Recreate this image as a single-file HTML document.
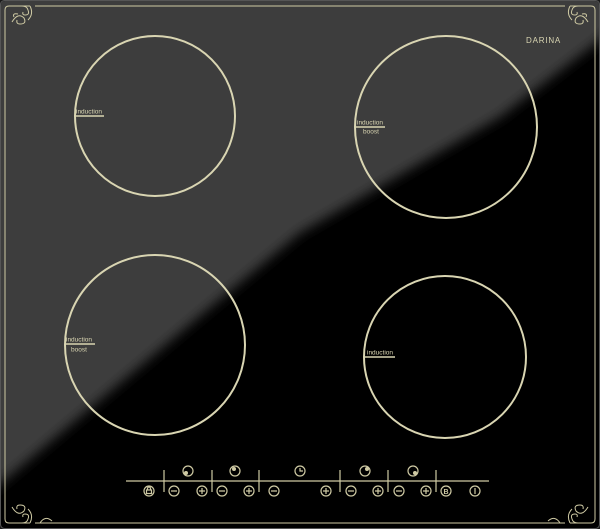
<!DOCTYPE html>
<html><head><style>
html,body{margin:0;padding:0;background:#000;}
svg{display:block}
</style></head><body>
<svg width="600" height="529" viewBox="0 0 600 529" xmlns="http://www.w3.org/2000/svg">
<defs>
<filter id="bl" x="-10%" y="-10%" width="120%" height="120%"><feGaussianBlur stdDeviation="6"/></filter>
<clipPath id="cp"><rect x="1" y="1" width="598" height="527" rx="4"/></clipPath>
</defs>
<rect x="0" y="0" width="600" height="529" fill="#1a1a1a"/>
<g clip-path="url(#cp)">
<rect x="0" y="0" width="600" height="529" fill="#000"/>
<polygon points="-20,-20 620,-20 620,20 600,40 500,117 300,233 200,316 100,400 0,484 -20,500" fill="#3c3c3c" filter="url(#bl)"/>
</g>
<rect x="0.5" y="0.5" width="599" height="528" rx="4" fill="none" stroke="#555" stroke-width="1"/>
<g fill="none" stroke="#cfcaa4" stroke-width="1">
<line x1="35" y1="6" x2="565" y2="6"/>
<line x1="5" y1="28" x2="5" y2="500"/>
<line x1="595" y1="28" x2="595" y2="500"/>
<line x1="35" y1="523" x2="565" y2="523"/>
<!-- corners -->
<path d="M5 28 V10 Q5 6 9 6 H30 M22 6 q5 0 6 4 q2 5 -3 5 q-3 0 -2 -3"/>
<path d="M12 22 q6 -10 12 -4 q3 6 -4 6 q-4 0 -3 -4 M30 6 q4 8 -2 14 M14 17 q-2 -4 4 -3"/>
<path d="M595 28 V10 Q595 6 591 6 H570 M578 6 q-5 0 -6 4 q-2 5 3 5 q3 0 2 -3"/>
<path d="M588 22 q-6 -10 -12 -4 q-3 6 4 6 q4 0 3 -4 M570 6 q-4 8 2 14 M586 17 q2 -4 -4 -3"/>
<path d="M5 500 V519 Q5 523 9 523 H30 M22 523 q5 0 6 -4 q2 -5 -3 -5 q-3 0 -2 3"/>
<path d="M12 507 q6 10 12 4 q3 -6 -4 -6 q-4 0 -3 4 M30 523 q4 -8 -2 -14 M40 523 q5 -8 12 -2"/>
<path d="M595 500 V519 Q595 523 591 523 H570 M578 523 q-5 0 -6 -4 q-2 -5 3 -5 q3 0 2 3"/>
<path d="M588 507 q-6 10 -12 4 q-3 -6 4 -6 q4 0 3 4 M570 523 q-4 -8 2 -14 M560 523 q-5 -8 -12 -2"/>
</g>
<g fill="none" stroke="#d9d5b2" stroke-width="2">
<circle cx="155" cy="116" r="80"/>
<circle cx="446" cy="127" r="91"/>
<circle cx="155" cy="345" r="90"/>
<circle cx="445" cy="357" r="81"/>
</g>
<g stroke="#d9d5b2" stroke-width="1.5">
<line x1="74" y1="116" x2="104" y2="116"/>
<line x1="355" y1="127" x2="385" y2="127"/>
<line x1="65" y1="344" x2="95" y2="344"/>
<line x1="364" y1="357" x2="395" y2="357"/>
</g>
<g fill="#d9d5b2" font-family="Liberation Sans, sans-serif" font-size="6.5">
<text x="76" y="113.5">induction</text>
<text x="357" y="124.5">induction</text>
<text x="363" y="133.5">boost</text>
<text x="66" y="341.5">induction</text>
<text x="71" y="351.5">boost</text>
<text x="367" y="354.5">induction</text>
<text x="526" y="43" font-size="8" letter-spacing="0.8">DARINA</text>
</g>
<g stroke="#cfcaa4" stroke-width="1.2" fill="none">
<line x1="126" y1="481" x2="489" y2="481"/>
<line x1="164" y1="470" x2="164" y2="492"/>
<line x1="212" y1="470" x2="212" y2="492"/>
<line x1="259" y1="470" x2="259" y2="492"/>
<line x1="340" y1="470" x2="340" y2="492"/>
<line x1="388" y1="470" x2="388" y2="492"/>
<line x1="436" y1="470" x2="436" y2="492"/>
<g>
<circle cx="188" cy="471" r="5"/><circle cx="235" cy="471" r="5"/><circle cx="300" cy="471" r="5"/><circle cx="365" cy="471" r="5"/><circle cx="413" cy="471" r="5"/>
<path d="M300 468 V471 H303"/>
</g>
<g>
<circle cx="149" cy="491" r="5"/><circle cx="174" cy="491" r="5"/><circle cx="202" cy="491" r="5"/><circle cx="222" cy="491" r="5"/><circle cx="249" cy="491" r="5"/><circle cx="274" cy="491" r="5"/><circle cx="326" cy="491" r="5"/><circle cx="351" cy="491" r="5"/><circle cx="378" cy="491" r="5"/><circle cx="399" cy="491" r="5"/><circle cx="426" cy="491" r="5"/><circle cx="446" cy="491" r="5"/><circle cx="475" cy="491" r="5"/>
<path d="M171 491h6M219 491h6M271 491h6M348 491h6M396 491h6"/>
<path d="M199 491h6M202 488v6M246 491h6M249 488v6M323 491h6M326 488v6M375 491h6M378 488v6M423 491h6M426 488v6"/>
<path d="M475 488v6"/>
<rect x="146.5" y="490" width="5" height="3.5"/><path d="M147.5 490v-1.5a1.5 1.5 0 0 1 3 0v1.5"/>
</g>
</g>
<g fill="#cfcaa4">
<circle cx="186" cy="473" r="2"/><circle cx="234" cy="469" r="2"/><circle cx="367" cy="469" r="2"/><circle cx="415" cy="473" r="2"/>
<text x="443.5" y="494" font-family="Liberation Sans, sans-serif" font-size="7" font-weight="bold">B</text>
</g>
</svg>
</body></html>
